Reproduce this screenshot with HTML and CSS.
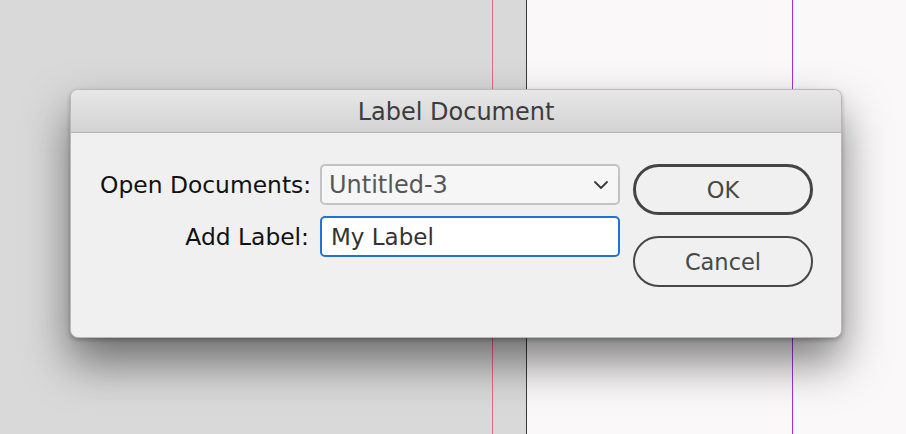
FILE: index.html
```html
<!DOCTYPE html>
<html>
<head>
<meta charset="utf-8">
<title>Label Document</title>
<link rel="stylesheet" href="styles.css">
</head>
<body>
<div class="canvas"></div>

<div class="dialog">
  <div class="titlebar">Label Document</div>
  <div class="body">
    <div class="form">
      <label class="lbl">Open Documents:</label>
      <div class="select">
        <span class="select-text">Untitled-3</span>
        <svg class="chevron" width="14" height="8" viewBox="0 0 14 8"><path d="M1 1 L7 7 L13 1" fill="none" stroke="#3a3a3a" stroke-width="1.8" stroke-linecap="round" stroke-linejoin="round"/></svg>
      </div>
      <label class="lbl">Add Label:</label>
      <div class="input"><span>My Label</span></div>
    </div>
    <div class="buttons">
      <div class="btn default">OK</div>
      <div class="btn">Cancel</div>
    </div>
  </div>
</div>
</body>
</html>
```
FILE: styles.css
```css
html, body {
  margin: 0;
  padding: 0;
  width: 906px;
  height: 434px;
  overflow: hidden;
}
body {
  position: relative;
  font-family: "DejaVu Sans", "Liberation Sans", sans-serif;
}
.canvas {
  width: 906px;
  height: 434px;
  background: linear-gradient(to right,
    #d9d9d9 0px, #d9d9d9 492px,
    #ee6a80 492px, #ee6a80 493px,
    #d9d9d9 493px, #d9d9d9 526px,
    #3a3a3a 526px, #3a3a3a 527px,
    #faf8f8 527px, #faf8f8 792px,
    #9a35e0 792px, #9a35e0 793.5px,
    #faf8f8 793.5px, #faf8f8 906px);
}

.dialog {
  position: absolute;
  left: 70px;
  top: 89px;
  width: 772px;
  height: 249px;
  box-sizing: border-box;
  border-radius: 8px;
  background: #f0f0f0;
  border: 1px solid #b9b9b9;
  box-shadow: 0 24px 45px rgba(0, 0, 0, 0.5), 0 2px 4px rgba(0,0,0,0.25);
  overflow: hidden;
  display: flex;
  flex-direction: column;
}
.titlebar {
  height: 43px;
  box-sizing: border-box;
  border-bottom: 1px solid #b3b3b3;
  background: linear-gradient(#e7e7e7, #d3d3d3);
  color: #3c3c3c;
  font-size: 24px;
  display: flex;
  align-items: center;
  justify-content: center;
  padding-top: 2px;
}
.body {
  display: flex;
  align-items: flex-start;
  padding: 31px 0 0 0;
}
.form {
  display: grid;
  grid-template-columns: 209px 300px;
  column-gap: 11px;
  row-gap: 11px;
  padding-left: 29px;
  align-items: center;
  align-content: start;
}
.lbl {
  text-align: right;
  font-size: 23.4px;
  color: #111;
  white-space: nowrap;
}
.select, .input {
  height: 41px;
  box-sizing: border-box;
  border-radius: 5px;
  display: flex;
  align-items: center;
  font-size: 23px;
}
.select {
  border: 2px solid #c3c3c3;
  background: #f6f6f6;
  color: #575757;
  padding: 0 0 0 7px;
  justify-content: space-between;
  font-size: 24px;
}
.chevron {
  margin-right: 10px;
}
.input {
  border: 2px solid #1f72d8;
  background: #ffffff;
  color: #333;
  padding-left: 9px;
}
.buttons {
  margin-left: 13px;
  display: flex;
  flex-direction: column;
  gap: 21px;
}
.btn {
  width: 180px;
  height: 51px;
  box-sizing: border-box;
  border: 2px solid #474747;
  border-radius: 26px;
  display: flex;
  align-items: center;
  justify-content: center;
  font-size: 22.5px;
  color: #474747;
  background: #f0f0f0;
}
.btn.default {
  border-width: 3px;
  border-color: #444;
}
```
